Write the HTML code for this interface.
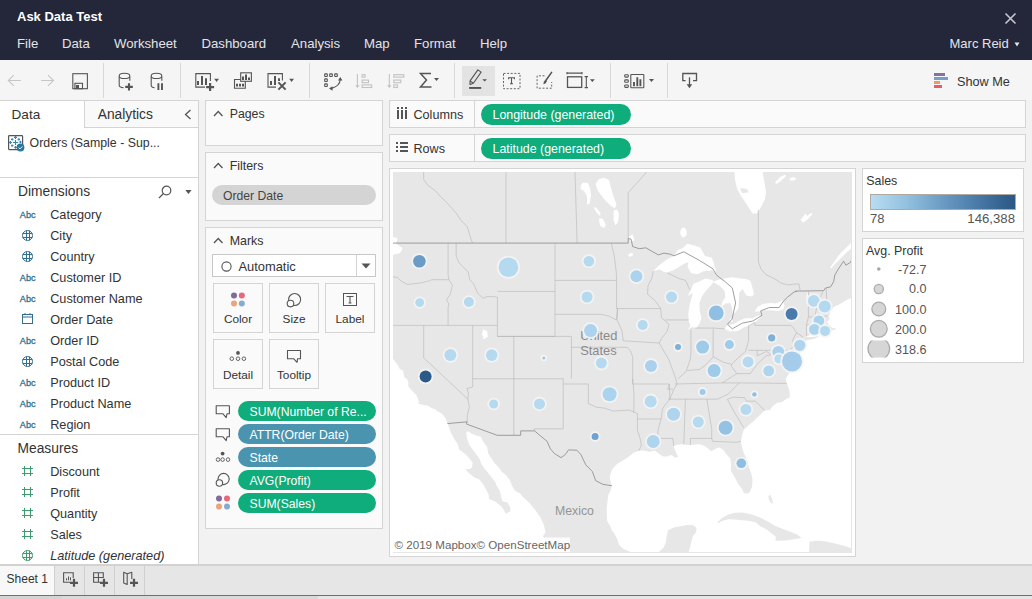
<!DOCTYPE html>
<html><head><meta charset="utf-8"><title>Ask Data Test</title>
<style>
*{margin:0;padding:0;box-sizing:border-box}
html,body{width:1032px;height:599px;overflow:hidden}
body{position:relative;background:#f2f2f2;font-family:"Liberation Sans",sans-serif;color:#333}
.a{position:absolute}
.t{position:absolute;white-space:nowrap;line-height:20px;font-family:"Liberation Sans",sans-serif}
svg.a{overflow:visible}
</style></head><body>
<div class="a" style="left:0px;top:0px;width:1032px;height:60px;background:#232739"></div>
<div class="t" style="left:17px;top:7px;font-size:13px;color:#ffffff;font-weight:bold;">Ask Data Test</div>
<div class="t" style="left:17px;top:34px;font-size:13.2px;color:#e4e4e8;">File</div>
<div class="t" style="left:62px;top:34px;font-size:13.2px;color:#e4e4e8;">Data</div>
<div class="t" style="left:114px;top:34px;font-size:13.2px;color:#e4e4e8;">Worksheet</div>
<div class="t" style="left:201.5px;top:34px;font-size:13.2px;color:#e4e4e8;">Dashboard</div>
<div class="t" style="left:291px;top:34px;font-size:13.2px;color:#e4e4e8;">Analysis</div>
<div class="t" style="left:364px;top:34px;font-size:13.2px;color:#e4e4e8;">Map</div>
<div class="t" style="left:414px;top:34px;font-size:13.2px;color:#e4e4e8;">Format</div>
<div class="t" style="left:480px;top:34px;font-size:13.2px;color:#e4e4e8;">Help</div>
<div class="t" style="left:949.5px;top:34px;font-size:13px;color:#e4e4e8;">Marc Reid</div>
<svg class="a" style="left:1014px;top:42px;" width="6" height="5" viewBox="0 0 6 5"><path d="M0.5 0.5 L5.5 0.5 L3 4.5Z" fill="#e4e4e8"/></svg>
<svg class="a" style="left:1004px;top:12px;" width="13" height="13" viewBox="0 0 13 13"><path d="M1.5 1.5 L11.5 11.5 M11.5 1.5 L1.5 11.5" stroke="#c8c8cc" stroke-width="1.6"/></svg>
<div class="a" style="left:0px;top:60px;width:1032px;height:40px;background:#f5f5f5"></div>
<div class="a" style="left:103px;top:63px;width:1px;height:35px;background:#d8d8d8"></div>
<div class="a" style="left:180px;top:63px;width:1px;height:35px;background:#d8d8d8"></div>
<div class="a" style="left:309px;top:63px;width:1px;height:35px;background:#d8d8d8"></div>
<div class="a" style="left:454px;top:63px;width:1px;height:35px;background:#d8d8d8"></div>
<div class="a" style="left:610px;top:63px;width:1px;height:35px;background:#d8d8d8"></div>
<div class="a" style="left:667px;top:63px;width:1px;height:35px;background:#d8d8d8"></div>
<svg class="a" style="left:7px;top:74px;" width="15" height="13" viewBox="0 0 15 13"><path d="M6.8 1.2 L1.3 6.5 L6.8 11.8 M1.3 6.5 H13.9" fill="none" stroke="#c6c6c6" stroke-width="1.1"/></svg>
<svg class="a" style="left:40px;top:74px;" width="15" height="13" viewBox="0 0 15 13"><path d="M8 1.2 L13.5 6.5 L8 11.8 M13.5 6.5 H1" fill="none" stroke="#c6c6c6" stroke-width="1.1"/></svg>
<svg class="a" style="left:71px;top:72px;" width="18" height="18" viewBox="0 0 18 18"><rect x="1.8" y="1.7" width="14.6" height="15" fill="none" stroke="#555" stroke-width="1.1"/><rect x="3.9" y="11.3" width="7.6" height="5.4" fill="none" stroke="#555" stroke-width="1.1"/><rect x="5" y="13" width="3" height="3.8" fill="#555"/></svg>
<svg class="a" style="left:117px;top:72px;" width="18" height="20" viewBox="0 0 18 20"><path d="M2.2 3.9 V13 Q2.2 15.6 6.5 15.6 M2.2 3.9 A5.3 2.6 0 0 1 12.8 3.9 A5.3 2.6 0 0 1 2.2 3.9 M12.8 3.9 V8.8" fill="none" stroke="#555" stroke-width="1.1"/><path d="M12 11.2 V18.6 M8.2 14.9 H15.8" stroke="#555" stroke-width="2.1"/></svg>
<svg class="a" style="left:149px;top:72px;" width="15" height="20" viewBox="0 0 15 20"><path d="M2.2 3.9 V13 Q2.2 15.6 5.5 15.6 M2.2 3.9 A5.3 2.6 0 0 1 12.8 3.9 A5.3 2.6 0 0 1 2.2 3.9 M12.8 3.9 V8.8" fill="none" stroke="#555" stroke-width="1.1"/><path d="M9.4 11.3 V18 M13 11.3 V18" stroke="#555" stroke-width="1.9"/></svg>
<svg class="a" style="left:194px;top:72px;" width="26" height="20" viewBox="0 0 26 20"><path d="M11 15.1 H1.8 V1.6 H16.4 V9" fill="none" stroke="#555" stroke-width="1.1"/><path d="M4 9 V13 M8 3.9 V13 M12 6.2 V13" stroke="#555" stroke-width="2"/><path d="M16.1 11.1 V19.1 M12.1 15.1 H20.1" stroke="#555" stroke-width="2.2"/><path d="M20.2 6.7 H25 L22.6 10Z" fill="#555"/></svg>
<svg class="a" style="left:233px;top:71px;" width="20" height="19" viewBox="0 0 20 19"><rect x="7.7" y="1.8" width="10.7" height="8.5" fill="none" stroke="#555" stroke-width="1.1"/><path d="M10 5.5 V9 M13 3.5 V9 M16 6.5 V9" stroke="#555" stroke-width="2"/><path d="M7.7 8.5 H1.5 V17.3 H12.3 V10.3" fill="none" stroke="#555" stroke-width="1.1"/><path d="M4 12.7 V15.5 M7 12.7 V15.5 M10 12.7 V15.5" stroke="#555" stroke-width="2"/></svg>
<svg class="a" style="left:266px;top:72px;" width="29" height="20" viewBox="0 0 29 20"><path d="M10 15.1 H2 V1.6 H16.4 V8.5" fill="none" stroke="#555" stroke-width="1.1"/><path d="M5 9 V13 M9 3.9 V13 M13 6.2 V9" stroke="#555" stroke-width="2"/><path d="M12.4 10.4 L19.6 17.6 M19.6 10.4 L12.4 17.6" stroke="#555" stroke-width="2"/><path d="M23.2 6.7 H28 L25.6 10Z" fill="#555"/></svg>
<svg class="a" style="left:323px;top:72px;" width="21" height="20" viewBox="0 0 21 20"><g fill="none" stroke="#555" stroke-width="1.1"><rect x="1.7" y="1.9" width="2.6" height="2.6" rx="0.5"/><rect x="6.7" y="1.9" width="2.6" height="2.6" rx="0.5"/><rect x="11.7" y="1.9" width="2.6" height="2.6" rx="0.5"/><rect x="1.7" y="6.9" width="2.6" height="2.6" rx="0.5"/><rect x="1.7" y="11.9" width="2.6" height="2.6" rx="0.5"/><path d="M17.2 7.6 Q17 14 8.6 16.4"/></g><path d="M17.3 5.0 L15.0 8.4 L19.4 8.6Z M6.0 16.6 L9.4 14.2 L9.6 18.8Z" fill="#555"/></svg>
<svg class="a" style="left:354px;top:72px;" width="19" height="19" viewBox="0 0 19 19"><g fill="none" stroke="#c2c2c2" stroke-width="1.1"><path d="M3.4 2 V14"/><rect x="8.1" y="2.7" width="3" height="2.4"/><rect x="8.1" y="8.1" width="6.4" height="2.6"/><rect x="8.1" y="12.9" width="9.6" height="2.6"/></g><path d="M3.4 16 L1.2 13.2 H5.6Z" fill="#c2c2c2"/></svg>
<svg class="a" style="left:387px;top:72px;" width="19" height="19" viewBox="0 0 19 19"><g fill="none" stroke="#c2c2c2" stroke-width="1.1"><path d="M2.3 2 V14"/><rect x="6.8" y="2.7" width="10" height="2.4"/><rect x="6.8" y="8.1" width="7" height="2.6"/><rect x="6.8" y="12.9" width="3.7" height="2.6"/></g><path d="M2.3 16 L0.1 13.2 H4.5Z" fill="#c2c2c2"/></svg>
<svg class="a" style="left:419px;top:72px;" width="21" height="17" viewBox="0 0 21 17"><path d="M12 1.5 H1.5 L7.5 8 L1.5 15 H12.5" fill="none" stroke="#555" stroke-width="1.5"/><path d="M15 6 H20 L17.5 9Z" fill="#555"/></svg>
<div class="a" style="left:462px;top:66px;width:33px;height:30px;background:#e3e3e3"></div>
<svg class="a" style="left:462px;top:66px;" width="33" height="30" viewBox="0 0 33 30"><path d="M8 18.5 L8.06 14.9 L15.86 3.85 L19.14 6.15 L11.34 17.2 Z M8.06 14.9 L11.34 17.2" fill="none" stroke="#555" stroke-width="1.1" stroke-linejoin="round"/><rect x="7.1" y="21" width="12.1" height="1.9" fill="#555"/><path d="M20.3 13.2 H25 L22.65 15.6Z" fill="#555"/></svg>
<svg class="a" style="left:503px;top:72px;" width="18" height="18" viewBox="0 0 18 18"><rect x="0.5" y="1.4" width="16.5" height="15.3" fill="none" stroke="#666" stroke-width="1" stroke-dasharray="2 1.6"/><path d="M5.6 7.3 V5.8 H11.4 V7.3 M8.5 5.8 V11.8 M7 11.8 H10" fill="none" stroke="#555" stroke-width="1.1"/></svg>
<svg class="a" style="left:536px;top:70px;" width="18" height="20" viewBox="0 0 18 20"><path d="M8.5 5.8 H1.1 V18.2 H15.7 V12" fill="none" stroke="#666" stroke-width="1" stroke-dasharray="2 1.6"/><path d="M15.6 2.4 L10 10.2" stroke="#555" stroke-width="1.6" stroke-linecap="round"/><path d="M9.4 9.8 L11 11.2 L9.4 13.6 L7.3 14.2 L8 11.6Z" fill="#555"/></svg>
<svg class="a" style="left:566px;top:71px;" width="31" height="19" viewBox="0 0 31 19"><path d="M1 1 V3.2 M1 2.1 H16 M16 1 V3.2 M20.3 5.6 V16.6 M18.6 5.6 H22 M18.6 16.6 H22" fill="none" stroke="#555" stroke-width="1.1"/><rect x="1.5" y="5.8" width="14.2" height="10.6" fill="none" stroke="#555" stroke-width="1.3"/><path d="M23.9 8.2 H28.8 L26.35 11Z" fill="#555"/></svg>
<svg class="a" style="left:623px;top:73px;" width="32" height="16" viewBox="0 0 32 16"><g fill="none" stroke="#555" stroke-width="1.1"><rect x="1.7" y="1.7" width="3.6" height="2.4" rx="0.8"/><rect x="1.7" y="6.9" width="3.6" height="2.4" rx="0.8"/><rect x="1.7" y="12" width="3.6" height="2.4" rx="0.8"/><rect x="7.8" y="1.5" width="13" height="13.3" rx="0.6"/></g><path d="M11 9 V13.2 M14.3 4.2 V13.2 M17.4 6.2 V13.2" stroke="#555" stroke-width="1.9"/><path d="M26 6 H31 L28.5 9Z" fill="#555"/></svg>
<svg class="a" style="left:681px;top:72px;" width="18" height="18" viewBox="0 0 18 18"><path d="M4.6 8.7 H1.8 V1.5 H15.5 V8.7 H12" fill="none" stroke="#555" stroke-width="1.3"/><path d="M8.5 5.3 V13" stroke="#555" stroke-width="1.3"/><path d="M5.7 12.2 H11.2 L8.45 16.2Z" fill="#555"/></svg>
<div class="a" style="left:934px;top:73px;width:11px;height:2.5px;background:#8175a0"></div>
<div class="a" style="left:934px;top:77px;width:14px;height:2.5px;background:#7a9dc7"></div>
<div class="a" style="left:934px;top:81px;width:6px;height:2.5px;background:#eb9b63"></div>
<div class="a" style="left:934px;top:85px;width:8px;height:2.5px;background:#e35d6a"></div>
<div class="t" style="left:957px;top:72px;font-size:12.7px;color:#333;">Show Me</div>
<div class="a" style="left:0px;top:100px;width:199px;height:465px;background:#ffffff;border-top:1px solid #d4d4d4;border-right:1px solid #d4d4d4"></div>
<div class="a" style="left:84px;top:101px;width:114px;height:27px;background:#f9f9f9;border-left:1px solid #d4d4d4;border-bottom:1px solid #d4d4d4"></div>
<div class="t" style="left:11.5px;top:105px;font-size:13.6px;color:#333;">Data</div>
<div class="t" style="left:97.7px;top:105px;font-size:13.8px;color:#333;">Analytics</div>
<svg class="a" style="left:184px;top:109px;" width="8" height="11" viewBox="0 0 8 11"><path d="M6.5 1 L1.5 5.5 L6.5 10" fill="none" stroke="#555" stroke-width="1.3"/></svg>
<svg class="a" style="left:8px;top:135px;" width="18" height="17" viewBox="0 0 18 17"><rect x="0.6" y="0.6" width="14" height="14" rx="0.8" fill="#fff" stroke="#555" stroke-width="1.2"/><path d="M4.9 7.5 H10.1 M7.5 4.9 V10.1 M6.0 2.4 H9.0 M7.5 0.8999999999999999 V3.9 M0.8999999999999999 7.5 H3.9 M2.4 6.0 V9.0 M11.1 7.0 H13.700000000000001 M12.4 5.7 V8.3 M3.0 4.4 H5.4 M4.2 3.2 V5.6000000000000005 M9.600000000000001 4.4 H12.0 M10.8 3.2 V5.6000000000000005 M3.0 10.6 H5.4 M4.2 9.4 V11.799999999999999 M6.2 12.4 H8.8 M7.5 11.1 V13.700000000000001 " stroke="#2f86c4" stroke-width="1.1"/><circle cx="12.5" cy="12.5" r="3.9" fill="#2b7898"/><path d="M10.6 12.6 L12 13.9 L14.4 11.4" fill="none" stroke="#fff" stroke-width="0.9"/></svg>
<div class="t" style="left:29.6px;top:133px;font-size:12.35px;color:#333;">Orders (Sample - Sup...</div>
<div class="a" style="left:0px;top:177px;width:198px;height:1px;background:#d4d4d4"></div>
<div class="t" style="left:18px;top:182px;font-size:13.8px;color:#333;">Dimensions</div>
<svg class="a" style="left:158px;top:185px;" width="14" height="14" viewBox="0 0 14 14"><circle cx="8.5" cy="5.5" r="4.3" fill="none" stroke="#555" stroke-width="1.2"/><path d="M5.5 8.5 L1 13" stroke="#555" stroke-width="1.3"/></svg>
<svg class="a" style="left:185px;top:190px;" width="8" height="5" viewBox="0 0 8 5"><path d="M0.3 0 H6.6 L3.45 4Z" fill="#555"/></svg>
<div class="t" style="left:19.8px;top:205px;font-size:9.2px;color:#33708f;-webkit-text-stroke:0.3px #33708f">Abc</div>
<div class="t" style="left:50.2px;top:205px;font-size:12.7px;color:#333;">Category</div>
<svg class="a" style="left:21px;top:229px;" width="13" height="13" viewBox="0 0 13 13"><g fill="none" stroke="#33708f" stroke-width="1"><circle cx="6.5" cy="6.5" r="5"/><path d="M5.5 1.6 V11.4 M8.5 1.6 V11.4 M1.6 4.5 H11.4 M1.6 8.5 H11.4"/></g></svg>
<div class="t" style="left:50.2px;top:226px;font-size:12.7px;color:#333;">City</div>
<svg class="a" style="left:21px;top:250px;" width="13" height="13" viewBox="0 0 13 13"><g fill="none" stroke="#33708f" stroke-width="1"><circle cx="6.5" cy="6.5" r="5"/><path d="M5.5 1.6 V11.4 M8.5 1.6 V11.4 M1.6 4.5 H11.4 M1.6 8.5 H11.4"/></g></svg>
<div class="t" style="left:50.2px;top:247px;font-size:12.7px;color:#333;">Country</div>
<div class="t" style="left:19.8px;top:268px;font-size:9.2px;color:#33708f;-webkit-text-stroke:0.3px #33708f">Abc</div>
<div class="t" style="left:50.2px;top:268px;font-size:12.7px;color:#333;">Customer ID</div>
<div class="t" style="left:19.8px;top:289px;font-size:9.2px;color:#33708f;-webkit-text-stroke:0.3px #33708f">Abc</div>
<div class="t" style="left:50.2px;top:289px;font-size:12.7px;color:#333;">Customer Name</div>
<svg class="a" style="left:22px;top:313px;" width="11" height="11" viewBox="0 0 11 11"><g fill="none" stroke="#33708f" stroke-width="1"><rect x="0.5" y="1.5" width="10" height="9"/><path d="M0.5 4 H10.5 M3 0 V2 M8 0 V2"/></g></svg>
<div class="t" style="left:50.2px;top:310px;font-size:12.7px;color:#333;">Order Date</div>
<div class="t" style="left:19.8px;top:331px;font-size:9.2px;color:#33708f;-webkit-text-stroke:0.3px #33708f">Abc</div>
<div class="t" style="left:50.2px;top:331px;font-size:12.7px;color:#333;">Order ID</div>
<svg class="a" style="left:21px;top:355px;" width="13" height="13" viewBox="0 0 13 13"><g fill="none" stroke="#33708f" stroke-width="1"><circle cx="6.5" cy="6.5" r="5"/><path d="M5.5 1.6 V11.4 M8.5 1.6 V11.4 M1.6 4.5 H11.4 M1.6 8.5 H11.4"/></g></svg>
<div class="t" style="left:50.2px;top:352px;font-size:12.7px;color:#333;">Postal Code</div>
<div class="t" style="left:19.8px;top:373px;font-size:9.2px;color:#33708f;-webkit-text-stroke:0.3px #33708f">Abc</div>
<div class="t" style="left:50.2px;top:373px;font-size:12.7px;color:#333;">Product ID</div>
<div class="t" style="left:19.8px;top:394px;font-size:9.2px;color:#33708f;-webkit-text-stroke:0.3px #33708f">Abc</div>
<div class="t" style="left:50.2px;top:394px;font-size:12.7px;color:#333;">Product Name</div>
<div class="t" style="left:19.8px;top:415px;font-size:9.2px;color:#33708f;-webkit-text-stroke:0.3px #33708f">Abc</div>
<div class="t" style="left:50.2px;top:415px;font-size:12.7px;color:#333;">Region</div>
<div class="a" style="left:0px;top:434px;width:198px;height:1px;background:#d4d4d4"></div>
<div class="t" style="left:17.5px;top:439px;font-size:13.8px;color:#333;">Measures</div>
<svg class="a" style="left:22px;top:466px;" width="12" height="11" viewBox="0 0 12 11"><path d="M2.5 0 V10 M8.5 0 V10 M0 2.5 H11 M0 7.5 H11" stroke="#3f9a72" stroke-width="1.05" fill="none"/></svg>
<div class="t" style="left:50.2px;top:462px;font-size:12.7px;color:#333;">Discount</div>
<svg class="a" style="left:22px;top:487px;" width="12" height="11" viewBox="0 0 12 11"><path d="M2.5 0 V10 M8.5 0 V10 M0 2.5 H11 M0 7.5 H11" stroke="#3f9a72" stroke-width="1.05" fill="none"/></svg>
<div class="t" style="left:50.2px;top:483px;font-size:12.7px;color:#333;">Profit</div>
<svg class="a" style="left:22px;top:508px;" width="12" height="11" viewBox="0 0 12 11"><path d="M2.5 0 V10 M8.5 0 V10 M0 2.5 H11 M0 7.5 H11" stroke="#3f9a72" stroke-width="1.05" fill="none"/></svg>
<div class="t" style="left:50.2px;top:504px;font-size:12.7px;color:#333;">Quantity</div>
<svg class="a" style="left:22px;top:529px;" width="12" height="11" viewBox="0 0 12 11"><path d="M2.5 0 V10 M8.5 0 V10 M0 2.5 H11 M0 7.5 H11" stroke="#3f9a72" stroke-width="1.05" fill="none"/></svg>
<div class="t" style="left:50.2px;top:525px;font-size:12.7px;color:#333;">Sales</div>
<svg class="a" style="left:21px;top:549px;" width="13" height="13" viewBox="0 0 13 13"><g fill="none" stroke="#3f9a72" stroke-width="1"><circle cx="6.5" cy="6.5" r="5"/><path d="M5.5 1.6 V11.4 M8.5 1.6 V11.4 M1.6 4.5 H11.4 M1.6 8.5 H11.4"/></g></svg>
<div class="t" style="left:50.2px;top:546px;font-size:12.7px;color:#333;font-style:italic;">Latitude (generated)</div>
<div class="a" style="left:205px;top:100px;width:178px;height:46px;background:#fafafa;border:1px solid #d4d4d4"></div>
<svg class="a" style="left:213px;top:110px;" width="11" height="7" viewBox="0 0 11 7"><path d="M1 6 L5.25 1.5 L9.5 6" fill="none" stroke="#555" stroke-width="1.3"/></svg>
<div class="t" style="left:229.7px;top:104px;font-size:12.3px;color:#333;">Pages</div>
<div class="a" style="left:205px;top:152px;width:178px;height:69px;background:#fafafa;border:1px solid #d4d4d4"></div>
<svg class="a" style="left:213px;top:162px;" width="11" height="7" viewBox="0 0 11 7"><path d="M1 6 L5.25 1.5 L9.5 6" fill="none" stroke="#555" stroke-width="1.3"/></svg>
<div class="t" style="left:229.7px;top:156px;font-size:12.4px;color:#333;">Filters</div>
<div class="a" style="left:212px;top:185px;width:164px;height:20px;background:#d4d4d4;border-radius:10px"></div>
<div class="t" style="left:223px;top:186px;font-size:12.2px;color:#444;">Order Date</div>
<div class="a" style="left:205px;top:227px;width:178px;height:302px;background:#fafafa;border:1px solid #d4d4d4"></div>
<svg class="a" style="left:213px;top:237px;" width="11" height="7" viewBox="0 0 11 7"><path d="M1 6 L5.25 1.5 L9.5 6" fill="none" stroke="#555" stroke-width="1.3"/></svg>
<div class="t" style="left:229.7px;top:231px;font-size:12.4px;color:#333;">Marks</div>
<div class="a" style="left:212px;top:254px;width:164px;height:23px;background:#fff;border:1px solid #c8c8c8"></div>
<div class="a" style="left:356px;top:255px;width:1px;height:21px;background:#d4d4d4"></div>
<svg class="a" style="left:221px;top:261px;" width="11" height="11" viewBox="0 0 11 11"><circle cx="5.5" cy="5.5" r="4.6" fill="none" stroke="#555" stroke-width="1.1"/></svg>
<div class="t" style="left:238.4px;top:257px;font-size:12.9px;color:#333;">Automatic</div>
<svg class="a" style="left:361px;top:263px;" width="10" height="6" viewBox="0 0 10 6"><path d="M0.5 0.5 H9.5 L5 5.5Z" fill="#555"/></svg>
<div class="a" style="left:213px;top:283px;width:50px;height:50px;background:#fafafa;border:1px solid #d4d4d4"></div>
<svg class="a" style="left:213px;top:283px" width="50" height="50"><circle cx="21" cy="12.5" r="3" fill="#7f6b9c"/><circle cx="28.8" cy="12.5" r="3" fill="#e8687a"/><circle cx="21" cy="20.5" r="3" fill="#eba57c"/><circle cx="28.8" cy="20.5" r="3" fill="#86abd3"/></svg>
<div class="t" style="left:238px;top:309px;font-size:11.8px;color:#333;transform:translateX(-50%)">Color</div>
<div class="a" style="left:269px;top:283px;width:50px;height:50px;background:#fafafa;border:1px solid #d4d4d4"></div>
<svg class="a" style="left:269px;top:283px" width="50" height="50"><g fill="none" stroke="#555" stroke-width="1.1"><circle cx="25.6" cy="16.5" r="6"/><circle cx="21.5" cy="20.6" r="3.3" fill="#fafafa"/></g></svg>
<div class="t" style="left:294px;top:309px;font-size:11.8px;color:#333;transform:translateX(-50%)">Size</div>
<div class="a" style="left:325px;top:283px;width:50px;height:50px;background:#fafafa;border:1px solid #d4d4d4"></div>
<svg class="a" style="left:325px;top:283px" width="50" height="50"><rect x="18.5" y="10.5" width="13" height="12" fill="none" stroke="#555" stroke-width="1"/><path d="M21.5 13.5 H28.5 M25 13.5 V20 M23.5 20 H26.5" fill="none" stroke="#555" stroke-width="1.1"/></svg>
<div class="t" style="left:350px;top:309px;font-size:11.8px;color:#333;transform:translateX(-50%)">Label</div>
<div class="a" style="left:213px;top:339px;width:50px;height:50px;background:#fafafa;border:1px solid #d4d4d4"></div>
<svg class="a" style="left:213px;top:339px" width="50" height="50"><g fill="none" stroke="#555" stroke-width="0.9"><circle cx="18.8" cy="19.7" r="1.8"/><circle cx="25" cy="19.7" r="1.8"/><circle cx="30.9" cy="19.7" r="1.8"/></g><circle cx="25" cy="13.9" r="1.9" fill="#555"/></svg>
<div class="t" style="left:238px;top:365px;font-size:11.8px;color:#333;transform:translateX(-50%)">Detail</div>
<div class="a" style="left:269px;top:339px;width:50px;height:50px;background:#fafafa;border:1px solid #d4d4d4"></div>
<svg class="a" style="left:269px;top:339px" width="50" height="50"><path d="M18.5 11.5 H31.5 V19.7 H28.6 L28 23.3 L24.6 19.7 H18.5Z" fill="none" stroke="#555" stroke-width="1.1" stroke-linejoin="round"/></svg>
<div class="t" style="left:294px;top:365px;font-size:11.8px;color:#333;transform:translateX(-50%)">Tooltip</div>
<div class="a" style="left:238px;top:401px;width:138px;height:20px;background:#0fac7c;border-radius:10.0px"></div>
<div class="t" style="left:249.5px;top:402px;font-size:12.2px;color:#fff;">SUM(Number of Re...</div>
<svg class="a" style="left:215px;top:404px;" width="17" height="16" viewBox="0 0 17 16"><path d="M1.2 1.8 H14.4 V9.8 H12 L11.2 13.6 L8 9.8 H1.2Z" fill="none" stroke="#555" stroke-width="1.1" stroke-linejoin="round"/></svg>
<div class="a" style="left:238px;top:424px;width:138px;height:20px;background:#4a94b0;border-radius:10.0px"></div>
<div class="t" style="left:249.5px;top:425px;font-size:12.2px;color:#fff;">ATTR(Order Date)</div>
<svg class="a" style="left:215px;top:427px;" width="17" height="16" viewBox="0 0 17 16"><path d="M1.2 1.8 H14.4 V9.8 H12 L11.2 13.6 L8 9.8 H1.2Z" fill="none" stroke="#555" stroke-width="1.1" stroke-linejoin="round"/></svg>
<div class="a" style="left:238px;top:447px;width:138px;height:20px;background:#4a94b0;border-radius:10.0px"></div>
<div class="t" style="left:249.5px;top:448px;font-size:12.2px;color:#fff;">State</div>
<svg class="a" style="left:215px;top:450px;" width="17" height="16" viewBox="0 0 17 16"><g fill="none" stroke="#555" stroke-width="0.9"><circle cx="3" cy="9.6" r="1.8"/><circle cx="7.6" cy="9.6" r="1.8"/><circle cx="13" cy="9.6" r="1.8"/></g><circle cx="7.6" cy="3.6" r="1.9" fill="#555"/></svg>
<div class="a" style="left:238px;top:470px;width:138px;height:20px;background:#0fac7c;border-radius:10.0px"></div>
<div class="t" style="left:249.5px;top:471px;font-size:12.2px;color:#fff;">AVG(Profit)</div>
<svg class="a" style="left:215px;top:473px;" width="17" height="16" viewBox="0 0 17 16"><g fill="none" stroke="#555" stroke-width="1.1"><circle cx="8.6" cy="6" r="5.6"/><circle cx="4.4" cy="10" r="3.2" fill="#fafafa"/></g></svg>
<div class="a" style="left:238px;top:493px;width:138px;height:20px;background:#0fac7c;border-radius:10.0px"></div>
<div class="t" style="left:249.5px;top:494px;font-size:12.2px;color:#fff;">SUM(Sales)</div>
<svg class="a" style="left:215px;top:495px;" width="17" height="17" viewBox="0 0 17 17"><circle cx="4" cy="3.6" r="3" fill="#7f6b9c"/><circle cx="12" cy="3.6" r="3" fill="#e8687a"/><circle cx="4" cy="11.6" r="3" fill="#eba57c"/><circle cx="12" cy="11.6" r="3" fill="#86abd3"/></svg>
<div class="a" style="left:389px;top:100px;width:637px;height:28px;background:#fafafa;border:1px solid #d4d4d4"></div>
<div class="a" style="left:474px;top:101px;width:1px;height:26px;background:#d4d4d4"></div>
<div class="t" style="left:413.5px;top:105px;font-size:12.6px;color:#333;">Columns</div>
<svg class="a" style="left:396px;top:106px" width="12" height="14"><path d="M2 1 V3 M6 1 V3 M10 1 V3 M2 4 V13 M6 4 V13 M10 4 V13" stroke="#555" stroke-width="2"/></svg>
<div class="a" style="left:389px;top:134px;width:637px;height:28px;background:#fafafa;border:1px solid #d4d4d4"></div>
<div class="a" style="left:474px;top:135px;width:1px;height:26px;background:#d4d4d4"></div>
<div class="t" style="left:413.5px;top:139px;font-size:12.6px;color:#333;">Rows</div>
<svg class="a" style="left:396px;top:141px" width="14" height="12"><path d="M0 2 H2 M0 6 H2 M0 10 H2 M4 2 H12 M4 6 H12 M4 10 H12" stroke="#555" stroke-width="2"/></svg>
<div class="a" style="left:481px;top:104px;width:150px;height:21px;background:#0fac7c;border-radius:10.5px"></div>
<div class="t" style="left:492.5px;top:105px;font-size:12.4px;color:#fff;">Longitude (generated)</div>
<div class="a" style="left:481px;top:138px;width:150px;height:21px;background:#0fac7c;border-radius:10.5px"></div>
<div class="t" style="left:492.5px;top:139px;font-size:12.4px;color:#fff;">Latitude (generated)</div>
<div class="a" style="left:862px;top:168px;width:162px;height:64px;background:#fff;border:1px solid #d4d4d4"></div>
<div class="t" style="left:866.3px;top:171px;font-size:12.4px;color:#333;">Sales</div>
<div class="a" style="left:870px;top:194px;width:146px;height:16px;background:linear-gradient(to right,#b9ddf1,#92c0df 25%,#6a9bc3 50%,#4878a6 75%,#2a5783);border:1px solid #b0a9a0"></div>
<div class="t" style="left:870px;top:209px;font-size:13px;color:#555;">78</div>
<div class="t" style="right:17px;top:209px;font-size:13.2px;color:#555;">146,388</div>
<div class="a" style="left:862px;top:238px;width:162px;height:125px;background:#fff;border:1px solid #d4d4d4"></div>
<div class="t" style="left:866px;top:241px;font-size:12.4px;color:#333;">Avg. Profit</div>
<svg class="a" style="left:862px;top:238px" width="162" height="125"><defs><clipPath id="lc"><rect x="0" y="102.5" width="40" height="17"/></clipPath></defs><circle cx="16.8" cy="31" r="1.8" fill="#a8a8a8"/><circle cx="16.8" cy="51" r="4.6" fill="#d6d6d6" stroke="#acacac" stroke-width="1.3"/><circle cx="16.8" cy="71" r="6.9" fill="#d6d6d6" stroke="#acacac" stroke-width="1.3"/><circle cx="16.8" cy="90.8" r="8.4" fill="#d6d6d6" stroke="#acacac" stroke-width="1.3"/><circle cx="16.8" cy="110.8" r="10.8" fill="#d6d6d6" stroke="#acacac" stroke-width="1.3" clip-path="url(#lc)"/></svg>
<div class="t" style="right:105.39999999999998px;top:260px;font-size:12.6px;color:#555;">-72.7</div>
<div class="t" style="right:105.39999999999998px;top:279px;font-size:12.6px;color:#555;">0.0</div>
<div class="t" style="right:105.39999999999998px;top:300px;font-size:12.6px;color:#555;">100.0</div>
<div class="t" style="right:105.39999999999998px;top:320px;font-size:12.6px;color:#555;">200.0</div>
<div class="t" style="right:105.39999999999998px;top:340px;font-size:12.6px;color:#555;">318.6</div>
<div class="a" style="left:389px;top:168px;width:467px;height:389px;background:#fff;border:1px solid #d4d4d4"></div>
<svg class="a" style="left:393px;top:172px;overflow:hidden" width="458" height="380" viewBox="393 172 458 380"><rect x="393" y="172" width="459" height="381" fill="#e7e7e7"/><path d="M374.3 355.8L392.8 357.9L393.2 359.0L398.2 365.8L399.8 369.0L403.1 370.5L403.5 373.6L404.4 377.3L407.2 379.3L408.5 382.9L408.1 386.0L412.2 391.1L416.3 395.1L418.4 400.2L418.8 403.7L422.1 404.7L427.8 405.7L431.9 408.2L435.6 409.2L436.9 411.1L439.3 412.1L442.2 414.1L445.5 418.0L447.2 422.5L448.8 426.8L450.9 432.7L454.2 438.9L457.9 444.2L459.1 449.4L465.3 454.1L470.2 459.3L472.7 463.1L471.8 467.7L469.8 469.1L465.3 469.1L468.1 472.4L473.9 477.0L479.7 479.8L483.8 485.3L488.7 494.4L489.1 498.9L495.3 501.6L501.9 507.0L506.0 513.8L510.1 511.5L510.5 507.9L507.6 502.5L502.7 501.6L501.1 497.1L500.2 491.7L496.9 486.2L494.9 481.6L491.2 477.0L487.9 472.4L483.8 467.7L481.3 464.0L479.7 459.3L476.4 454.6L472.3 448.9L469.0 444.2L467.3 438.9L466.1 432.7L468.1 431.2L471.4 433.6L476.4 435.5L480.5 436.5L482.5 440.4L487.1 447.0L488.3 453.7L491.6 458.4L494.5 463.1L498.6 467.3L501.5 471.5L506.0 475.2L509.7 479.8L512.6 487.1L515.1 490.8L520.0 493.5L524.1 498.0L529.9 503.4L535.6 510.6L540.6 517.8L543.9 524.9L545.5 531.9L543.0 536.3L545.5 541.6L550.4 545.9L557.0 551.2L561.1 556.4L563.6 565.0L374.3 565.0Z" fill="#ffffff"/><path d="M868.1 296.0L852.5 297.8L847.5 299.5L842.6 302.4L838.5 304.7L833.6 306.9L830.3 312.0L828.6 316.5L829.9 318.8L827.0 322.1L829.0 324.9L832.7 328.2L835.2 327.7L834.8 324.9L835.6 329.3L830.3 331.0L825.7 331.5L822.9 332.6L816.3 333.7L809.7 335.3L804.7 337.0L813.0 337.0L820.0 335.9L815.4 338.6L805.6 340.8L802.3 341.9L802.3 346.2L801.5 349.9L798.6 354.2L794.5 358.5L793.2 355.8L789.9 353.7L793.2 360.0L793.6 364.3L792.0 368.4L789.1 373.6L786.2 377.8L785.8 379.8L787.1 384.0L789.5 391.1L789.9 397.2L786.6 398.7L781.7 402.2L777.6 402.7L773.5 405.2L769.8 410.1L764.4 410.6L759.5 415.6L753.7 421.0L748.0 425.9L743.8 429.8L742.2 434.6L741.0 441.3L742.2 448.0L744.3 454.6L748.0 462.1L748.4 466.8L751.3 473.3L752.5 479.8L752.1 486.2L750.0 492.1L747.6 493.5L743.8 493.0L742.2 488.9L738.5 484.4L736.0 479.8L733.6 475.2L730.7 470.5L731.1 464.0L730.3 458.4L726.6 454.6L723.3 449.9L719.6 447.5L715.9 448.5L711.3 451.3L708.5 448.9L704.8 446.1L699.4 444.2L692.8 444.7L687.1 445.1L682.1 444.2L675.9 445.1L673.5 446.6L675.1 450.4L676.8 454.6L678.4 456.5L675.1 457.4L671.4 455.1L667.3 456.5L663.2 456.5L659.9 454.6L655.0 450.8L649.2 451.8L643.4 450.4L638.9 450.8L633.6 452.7L630.3 455.6L627.0 457.9L621.6 461.2L617.1 464.0L613.0 468.2L610.9 472.4L609.7 477.9L611.3 484.4L611.8 485.7L610.5 490.8L608.1 495.3L607.6 500.7L606.8 507.0L606.8 515.1L607.2 521.3L610.1 525.8L611.8 530.2L614.6 533.7L617.5 539.8L618.8 544.6L621.2 547.3L624.5 549.4L629.0 551.2L633.6 555.1L636.0 565.0L656.6 565.0L657.0 553.8L659.5 551.2L663.6 547.7L665.7 542.5L666.9 535.5L668.1 530.2L673.9 527.5L680.5 526.2L687.1 524.9L693.6 525.3L696.5 528.0L696.1 531.9L692.8 536.3L691.6 540.7L690.4 545.9L688.7 552.0L686.2 565.0L868.1 565.0Z" fill="#ffffff"/><path d="M717.5 522.2L722.0 518.0L728.3 514.4L735.0 512.8L742.0 512.4L750.0 514.0L759.6 517.3L767.0 521.0L775.3 526.1L783.0 529.0L791.0 532.0L797.0 534.5L801.7 537.9L795.0 539.0L786.0 540.5L775.3 540.8L776.0 537.0L771.0 533.0L767.4 530.0L760.0 526.0L755.7 522.2L748.0 520.8L742.0 520.3L735.0 519.5L728.3 519.3L722.0 521.0L718.5 523.2Z" fill="#e7e7e7"/><path d="M809.5 541.8L815.0 540.8L820.3 540.8L828.0 542.0L836.0 543.7L845.0 546.0L853.0 549.0L853.0 554.0L809.0 554.0Z" fill="#e7e7e7"/><path d="M768.4 495.8L770.5 495.0L772.0 499.0L773.3 503.6L771.0 503.0L769.0 500.0Z" fill="#e7e7e7"/><path d="M653.3 270.7L659.9 269.5L664.0 271.9L667.3 272.5L673.9 270.1L679.7 266.5L684.6 263.5L688.3 262.2L687.5 267.1L691.2 273.1L697.8 274.3L703.5 271.3L710.1 270.7L712.2 270.1L715.0 273.7L715.9 270.7L713.8 262.9L711.7 257.4L705.2 256.1L700.2 247.5L694.5 245.6L687.1 243.7L682.9 248.1L677.2 250.6L673.9 256.1L667.3 259.2L660.7 264.1L653.3 270.7Z" fill="#ffffff"/><path d="M688.3 329.3L690.4 326.0L688.7 321.0L688.3 313.7L689.5 305.8L691.2 299.5L692.8 293.1L687.9 296.0L690.4 290.2L693.6 283.8L699.4 281.4L705.2 278.5L711.7 279.7L713.8 281.4L710.9 285.6L707.6 289.1L704.3 293.1L701.5 297.2L699.4 303.5L699.8 310.9L701.5 317.7L699.8 323.2L696.1 328.2L692.0 329.6Z" fill="#ffffff"/><path d="M713.8 281.4L718.3 279.7L724.1 278.5L732.3 277.3L740.6 278.5L746.3 279.1L750.4 280.8L752.5 287.9L754.1 293.7L752.1 296.6L746.3 295.5L742.6 289.1L739.3 292.6L738.9 300.6L738.5 308.6L735.2 312.6L732.7 314.3L731.9 307.5L730.3 302.9L725.7 303.5L721.2 306.9L722.4 301.8L725.3 297.2L724.5 290.8L720.0 286.1L713.8 282.6Z" fill="#ffffff"/><path d="M724.5 328.8L729.9 331.5L738.1 331.0L744.7 327.1L750.4 324.9L756.2 321.6L761.5 316.5L758.7 315.6L752.1 318.2L745.5 318.2L739.7 320.4L733.1 324.3L727.4 324.9Z" fill="#ffffff"/><path d="M754.5 311.5L757.4 306.9L762.8 304.1L770.2 302.9L775.9 303.5L782.5 300.6L784.6 305.8L783.4 309.2L778.4 310.9L771.8 310.3L764.4 310.3L759.5 311.5Z" fill="#ffffff"/><path d="M729.4 321.6L732.7 322.1L732.3 318.8L729.9 318.8Z" fill="#ffffff"/><path d="M630.3 241.8L634.4 240.6L632.7 234.3L628.6 236.8Z" fill="#ffffff"/><path d="M483.0 329.3L487.1 331.0L487.9 336.4L483.8 339.2L482.1 334.3Z" fill="#ffffff"/><path d="M807.2 291.4L808.5 297.2L807.2 307.5L806.4 298.3Z" fill="#ffffff"/><path d="M803.1 222.7L807.2 216.2L805.6 213.6L800.6 220.1Z" fill="#ffffff"/><path d="M392.0 237.0L396.0 237.5L397.5 239.0L396.0 243.0L398.5 245.5L402.5 248.0L401.5 251.0L399.0 253.5L392.0 255.0Z" fill="#ffffff"/><path d="M604.0 177.7L609.0 180.0L611.0 188.0L614.0 198.0L616.5 205.0L614.8 208.5L611.0 206.0L604.0 199.0L598.0 191.0L595.5 184.0L599.0 179.0Z" fill="#ffffff"/><path d="M613.7 210.6L617.0 209.5L619.0 214.0L618.0 222.0L615.5 225.5L613.5 220.0Z" fill="#ffffff"/><path d="M583.0 182.5L588.0 183.0L590.0 188.0L591.0 195.0L589.5 204.0L587.0 204.5L587.0 196.0L584.0 191.0L580.5 189.0L581.0 185.0Z" fill="#ffffff"/><path d="M593.5 207.5L596.0 207.5L600.5 213.0L600.0 216.0L597.0 213.0Z" fill="#ffffff"/><path d="M599.5 218.0L603.0 219.0L605.8 225.0L604.0 228.0L600.5 226.0L599.0 221.0Z" fill="#ffffff"/><path d="M734.5 171.0L762.4 171.0L764.0 180.0L766.0 192.0L765.0 199.0L761.0 207.0L757.0 213.4L752.5 213.4L746.2 203.5L741.0 196.0L737.2 189.0L735.0 180.0Z" fill="#ffffff"/><path d="M775.0 182.5L780.0 177.0L785.0 174.7L786.0 176.0L781.0 181.0L776.5 184.0Z" fill="#ffffff"/><path d="M789.5 178.5L793.0 177.0L796.7 178.5L794.0 180.5L790.0 180.5Z" fill="#ffffff"/><path d="M803.5 221.0L807.0 216.0L811.5 212.8L812.5 214.0L808.0 219.0L804.5 222.0Z" fill="#ffffff"/><path d="M830.2 267.5L834.0 262.0L839.0 255.0L844.8 249.0L853.0 241.0L853.0 247.0L846.0 253.0L840.0 259.0L835.0 264.0L831.0 268.5Z" fill="#ffffff"/><path d="M740 188 L747 189 L748.5 192.5 L742 193 Z" fill="#e7e7e7"/><ellipse cx="683.5" cy="232.5" rx="3.2" ry="5" fill="#ffffff"/><ellipse cx="630.7" cy="254.8" rx="2.5" ry="1.6" fill="#ffffff" transform="rotate(-25 630.7 254.8)"/><path d="M448.1 243.1L448.1 274.7L449.0 279.7L431.9 279.7L429.5 280.8L419.6 283.2L413.0 283.8L407.2 284.4L400.7 280.8L397.4 277.3L390.0 276.7M449.0 279.7L452.5 285.6L450.0 294.9L446.7 299.5L448.8 304.1L448.1 307.5L448.1 325.4M382.5 325.4L497.4 325.4M423.7 325.4L423.7 357.9L467.9 399.2M467.9 399.2L468.4 393.1L466.9 388.5L472.7 387.0L472.7 325.4M467.9 399.2L469.4 407.2L467.3 415.1L467.2 421.8M456.2 243.1L456.2 256.1L459.1 262.9L468.1 271.9L469.8 279.7L473.9 284.4L477.6 293.1L483.0 298.3L487.1 296.6L493.7 296.6L497.4 297.2L497.4 336.4L513.8 336.4L513.8 435.3M497.4 291.4L555.0 291.4M555.0 243.1L555.0 336.4L497.4 336.4M472.7 378.8L563.6 378.8M513.8 336.4L571.4 336.4L571.4 378.8M555.0 280.4L616.6 280.4M555.0 314.3L600.6 314.3L608.9 316.0L616.3 319.9L617.5 308.6M611.3 243.1L614.2 255.5L616.3 272.5L616.6 280.4L616.6 308.6L660.7 308.6M571.4 347.3L627.0 347.3L630.3 350.5L632.7 356.9L632.7 384.0M563.2 378.8L563.2 428.8L534.0 428.8L534.6 430.9M563.6 384.0L588.3 384.0L588.3 403.6L596.5 407.2L604.8 408.2L613.0 411.1L621.2 410.6L629.4 410.1L637.4 413.6L637.4 419.0L661.1 419.0M632.7 378.8L634.1 395.1L633.7 412.7M632.7 384.0L669.4 384.0L667.6 389.1L673.1 389.1M637.4 419.0L637.4 429.8L640.1 438.4L641.4 445.1L638.9 450.8M661.1 419.0L658.3 428.8L657.4 438.4L672.8 438.4L673.9 446.1M669.4 384.0L669.8 399.2L665.7 404.2L662.4 409.2L661.1 419.0M617.5 308.6L617.1 319.9L622.0 331.0L623.3 340.8L659.1 343.0M660.7 308.6L661.5 317.7L669.0 324.3L667.3 331.0L661.5 338.6L659.1 343.0L669.0 360.0L674.7 375.7L677.2 384.0L673.9 389.1L669.8 399.2M653.3 271.3L651.7 278.5L648.0 285.6L647.6 294.3L655.0 300.6L660.7 308.6M667.3 272.9L678.8 278.5L685.4 280.3L688.7 287.3L690.4 290.2M665.3 319.9L688.7 319.9M690.9 328.1L713.4 328.1L724.5 328.8M690.9 328.1L690.9 354.2L690.4 359.0L687.9 366.4L686.2 370.5M713.2 328.8L713.2 356.9M678.0 378.8L687.1 370.5L699.4 369.5L705.2 365.3L713.4 356.9L723.3 362.2L731.5 364.3L738.1 357.9L745.5 351.5L748.6 340.8L748.6 325.4M731.5 364.3L731.5 366.4L736.7 373.6L722.4 382.9L674.7 384.0M668.1 399.2L717.5 399.2L728.2 394.1L739.3 382.9L722.4 382.9M739.3 382.9L786.6 383.4M736.7 373.6L750.4 373.6L757.0 364.3L766.1 355.8L771.8 354.7L776.8 359.0L783.4 368.4M748.6 350.3L787.7 350.3L787.6 363.7L793.6 363.7M757.2 350.3L757.2 355.8L766.5 351.5L771.8 354.7M748.6 325.7L754.9 322.5L754.9 325.4L791.2 325.4L793.2 327.7L796.5 332.6L792.4 340.8L795.7 345.1L789.9 349.4M796.5 332.6L803.1 337.0M806.4 336.4L806.4 324.9L808.4 317.1L808.4 291.4M806.4 324.9L820.4 325.2L820.4 333.2M808.4 317.1L827.8 316.0M814.6 317.3L817.1 306.4L822.9 291.4M828.6 313.2L827.0 302.9L826.1 287.9M685.4 399.2L683.8 444.2M706.8 399.2L711.7 428.8L711.7 438.4L690.4 438.4L690.4 445.1M711.7 438.4L712.6 441.3L736.4 442.3L740.6 441.3M727.4 399.2L734.8 413.1L743.8 427.8M727.4 399.2L733.1 397.2L744.7 397.7L745.5 399.2L746.3 401.2L755.4 401.2L764.8 410.6M506.0 243.1L506.0 148.2M472.5 243.1L469.8 235.5L467.3 226.6L460.7 220.1L456.6 213.6L448.4 204.3L440.2 196.2L435.2 190.7L427.8 185.2L423.7 179.7L423.7 148.2M577.1 243.1L574.3 148.2M628.2 238.3L628.2 192.8L678.8 135.6M758.3 209.8L758.3 261.2L761.0 269.0L766.0 274.7L771.0 277.0L776.8 280.0L781.0 283.0L788.0 285.0L795.0 284.0L799.0 284.0L800.0 290.0" fill="none" stroke="#acacac" stroke-width="0.5"/><path d="M374.3 243.1L628.2 243.1L628.2 238.3L631.1 239.3L632.7 246.6L639.3 248.7L645.9 247.8L651.7 251.2L658.3 254.9L664.0 253.1L670.6 254.3L673.9 255.8L683.8 251.8L699.4 260.4L713.0 268.9L715.9 274.3L719.2 277.3L724.1 280.8L732.3 287.9L735.6 302.9L733.1 314.3L732.3 318.8L727.4 324.3L732.3 328.8L742.2 323.2L752.9 321.0L762.0 315.4L760.7 310.9L769.4 307.5L779.2 307.5L783.4 301.2L787.5 297.2L794.0 292.0L796.5 291.4L795.7 291.1L823.7 290.7L825.5 288.0L830.7 286.8L833.7 281.5L834.8 275.1L837.8 269.9L843.6 261.1L845.9 265.2L850.6 262.3L853.0 256.0" fill="none" stroke="#939393" stroke-width="0.9"/><path d="M447.4 423.6L467.2 421.8L466.4 424.0L497.2 435.3L520.7 435.3L520.7 430.9L534.6 430.9L538.9 434.6L547.1 441.3L550.4 448.9L554.6 453.7L561.1 457.6L565.3 454.6L568.5 449.9L576.8 450.2L580.9 454.6L585.8 464.9L592.4 471.5L595.7 480.7L603.1 484.4L611.8 485.7" fill="none" stroke="#939393" stroke-width="0.9"/><defs><filter id="hb" x="-50%" y="-50%" width="200%" height="200%"><feGaussianBlur stdDeviation="0.7"/></filter></defs><text x="580.2" y="339.5" font-size="12.9" fill="#8a8a8a" font-family="Liberation Sans">United</text><text x="580.2" y="354.6" font-size="12.9" fill="#8a8a8a" font-family="Liberation Sans">States</text><text x="555" y="514.7" font-size="12.3" fill="#959595" font-family="Liberation Sans">Mexico</text><circle cx="419.4" cy="261.3" r="8.1" fill="#f4f4f4" fill-opacity="0.9" filter="url(#hb)"/><circle cx="419.4" cy="261.3" r="6.3" fill="#6a9cc6"/><circle cx="508.4" cy="267.3" r="11.600000000000001" fill="#f4f4f4" fill-opacity="0.9" filter="url(#hb)"/><circle cx="508.4" cy="267.3" r="9.8" fill="#b5d9ef"/><circle cx="419.7" cy="302.6" r="6.2" fill="#f4f4f4" fill-opacity="0.9" filter="url(#hb)"/><circle cx="419.7" cy="302.6" r="4.4" fill="#b5d9ef"/><circle cx="468.9" cy="302" r="6.8" fill="#f4f4f4" fill-opacity="0.9" filter="url(#hb)"/><circle cx="468.9" cy="302" r="5" fill="#b5d9ef"/><circle cx="588.9" cy="261.2" r="7.1" fill="#f4f4f4" fill-opacity="0.9" filter="url(#hb)"/><circle cx="588.9" cy="261.2" r="5.3" fill="#b5d9ef"/><circle cx="587.1" cy="297" r="7.3" fill="#f4f4f4" fill-opacity="0.9" filter="url(#hb)"/><circle cx="587.1" cy="297" r="5.5" fill="#b5d9ef"/><circle cx="636.4" cy="276.2" r="7.8" fill="#f4f4f4" fill-opacity="0.9" filter="url(#hb)"/><circle cx="636.4" cy="276.2" r="6" fill="#acd3ee"/><circle cx="671.5" cy="297" r="7.3" fill="#f4f4f4" fill-opacity="0.9" filter="url(#hb)"/><circle cx="671.5" cy="297" r="5.5" fill="#b5d9ef"/><circle cx="590.6" cy="330.6" r="8.3" fill="#f4f4f4" fill-opacity="0.9" filter="url(#hb)"/><circle cx="590.6" cy="330.6" r="6.5" fill="#acd3ee"/><circle cx="642.7" cy="325" r="6.8" fill="#f4f4f4" fill-opacity="0.9" filter="url(#hb)"/><circle cx="642.7" cy="325" r="5" fill="#b5d9ef"/><circle cx="601.4" cy="363.1" r="7.3" fill="#f4f4f4" fill-opacity="0.9" filter="url(#hb)"/><circle cx="601.4" cy="363.1" r="5.5" fill="#b5d9ef"/><circle cx="651" cy="365.9" r="7.8" fill="#f4f4f4" fill-opacity="0.9" filter="url(#hb)"/><circle cx="651" cy="365.9" r="6" fill="#a9d1ee"/><circle cx="543.8" cy="358.1" r="3.3" fill="#f4f4f4" fill-opacity="0.9" filter="url(#hb)"/><circle cx="543.8" cy="358.1" r="1.5" fill="#9ec8e8"/><circle cx="539.5" cy="403.9" r="7.3" fill="#f4f4f4" fill-opacity="0.9" filter="url(#hb)"/><circle cx="539.5" cy="403.9" r="5.5" fill="#b5d9ef"/><circle cx="609.6" cy="394.2" r="8.8" fill="#f4f4f4" fill-opacity="0.9" filter="url(#hb)"/><circle cx="609.6" cy="394.2" r="7" fill="#acd3ee"/><circle cx="650.7" cy="401.4" r="7.8" fill="#f4f4f4" fill-opacity="0.9" filter="url(#hb)"/><circle cx="650.7" cy="401.4" r="6" fill="#b5d9ef"/><circle cx="595.1" cy="436.4" r="5.3" fill="#f4f4f4" fill-opacity="0.9" filter="url(#hb)"/><circle cx="595.1" cy="436.4" r="3.5" fill="#6fa3cf"/><circle cx="653.2" cy="441.5" r="8.3" fill="#f4f4f4" fill-opacity="0.9" filter="url(#hb)"/><circle cx="653.2" cy="441.5" r="6.5" fill="#aed4ee"/><circle cx="673.5" cy="414.2" r="8.3" fill="#f4f4f4" fill-opacity="0.9" filter="url(#hb)"/><circle cx="673.5" cy="414.2" r="6.5" fill="#aed4ee"/><circle cx="450.4" cy="355.1" r="7.8" fill="#f4f4f4" fill-opacity="0.9" filter="url(#hb)"/><circle cx="450.4" cy="355.1" r="6" fill="#b5d9ef"/><circle cx="491.7" cy="355.1" r="7.6" fill="#f4f4f4" fill-opacity="0.9" filter="url(#hb)"/><circle cx="491.7" cy="355.1" r="5.8" fill="#b5d9ef"/><circle cx="425.6" cy="376.4" r="7.8" fill="#f4f4f4" fill-opacity="0.9" filter="url(#hb)"/><circle cx="425.6" cy="376.4" r="6" fill="#2b5a88"/><circle cx="493.7" cy="404" r="6.3" fill="#f4f4f4" fill-opacity="0.9" filter="url(#hb)"/><circle cx="493.7" cy="404" r="4.5" fill="#b5d9ef"/><circle cx="716.2" cy="312.9" r="9.200000000000001" fill="#f4f4f4" fill-opacity="0.9" filter="url(#hb)"/><circle cx="716.2" cy="312.9" r="7.4" fill="#8fbfe3"/><circle cx="678" cy="347.1" r="4.8" fill="#f4f4f4" fill-opacity="0.9" filter="url(#hb)"/><circle cx="678" cy="347.1" r="3" fill="#7fb0d8"/><circle cx="702.6" cy="347.1" r="8.3" fill="#f4f4f4" fill-opacity="0.9" filter="url(#hb)"/><circle cx="702.6" cy="347.1" r="6.5" fill="#9fcbea"/><circle cx="729.4" cy="344.6" r="6.3" fill="#f4f4f4" fill-opacity="0.9" filter="url(#hb)"/><circle cx="729.4" cy="344.6" r="4.5" fill="#9fcbea"/><circle cx="748.1" cy="361.9" r="7.3" fill="#f4f4f4" fill-opacity="0.9" filter="url(#hb)"/><circle cx="748.1" cy="361.9" r="5.5" fill="#b5d9ef"/><circle cx="714.1" cy="370.6" r="8.3" fill="#f4f4f4" fill-opacity="0.9" filter="url(#hb)"/><circle cx="714.1" cy="370.6" r="6.5" fill="#9fcbea"/><circle cx="702.6" cy="391.9" r="4.8" fill="#f4f4f4" fill-opacity="0.9" filter="url(#hb)"/><circle cx="702.6" cy="391.9" r="3" fill="#9fcbea"/><circle cx="754.4" cy="394.4" r="4.0" fill="#f4f4f4" fill-opacity="0.9" filter="url(#hb)"/><circle cx="754.4" cy="394.4" r="2.2" fill="#8fbfe3"/><circle cx="745.9" cy="409.4" r="7.3" fill="#f4f4f4" fill-opacity="0.9" filter="url(#hb)"/><circle cx="745.9" cy="409.4" r="5.5" fill="#b5d9ef"/><circle cx="698.3" cy="422" r="7.3" fill="#f4f4f4" fill-opacity="0.9" filter="url(#hb)"/><circle cx="698.3" cy="422" r="5.5" fill="#b5d9ef"/><circle cx="725.6" cy="427.7" r="8.8" fill="#f4f4f4" fill-opacity="0.9" filter="url(#hb)"/><circle cx="725.6" cy="427.7" r="7" fill="#93c2e4"/><circle cx="741.3" cy="463.3" r="6.6" fill="#f4f4f4" fill-opacity="0.9" filter="url(#hb)"/><circle cx="741.3" cy="463.3" r="4.8" fill="#8ebee2"/><circle cx="791.6" cy="314.1" r="7.8" fill="#f4f4f4" fill-opacity="0.9" filter="url(#hb)"/><circle cx="791.6" cy="314.1" r="6.0" fill="#4a7aab"/><circle cx="813.8" cy="300.8" r="7.7" fill="#f4f4f4" fill-opacity="0.9" filter="url(#hb)"/><circle cx="813.8" cy="300.8" r="5.9" fill="#b5d9ef"/><circle cx="824.7" cy="306.5" r="7.8" fill="#f4f4f4" fill-opacity="0.9" filter="url(#hb)"/><circle cx="824.7" cy="306.5" r="6.0" fill="#b3d9ef"/><circle cx="771.7" cy="337.8" r="5.4" fill="#f4f4f4" fill-opacity="0.9" filter="url(#hb)"/><circle cx="771.7" cy="337.8" r="3.6" fill="#7fb0d8"/><circle cx="799.8" cy="345.3" r="7.3999999999999995" fill="#f4f4f4" fill-opacity="0.9" filter="url(#hb)"/><circle cx="799.8" cy="345.3" r="5.6" fill="#aed4ee"/><circle cx="778.3" cy="352.1" r="7.8" fill="#f4f4f4" fill-opacity="0.9" filter="url(#hb)"/><circle cx="778.3" cy="352.1" r="6.0" fill="#a9d1ee"/><circle cx="778.8" cy="358.9" r="6.3" fill="#f4f4f4" fill-opacity="0.9" filter="url(#hb)"/><circle cx="778.8" cy="358.9" r="4.5" fill="#b7dcf1"/><circle cx="792" cy="361.4" r="11.8" fill="#f4f4f4" fill-opacity="0.9" filter="url(#hb)"/><circle cx="792" cy="361.4" r="10" fill="#a5cdeb"/><circle cx="768.7" cy="370.9" r="7.2" fill="#f4f4f4" fill-opacity="0.9" filter="url(#hb)"/><circle cx="768.7" cy="370.9" r="5.4" fill="#aed4ee"/><circle cx="818.9" cy="320.8" r="7.2" fill="#f4f4f4" fill-opacity="0.9" filter="url(#hb)"/><circle cx="818.9" cy="320.8" r="5.4" fill="#aad2ed"/><circle cx="814.4" cy="329.4" r="7.2" fill="#f4f4f4" fill-opacity="0.9" filter="url(#hb)"/><circle cx="814.4" cy="329.4" r="5.4" fill="#acd3ee"/><circle cx="825" cy="330.9" r="6.8" fill="#f4f4f4" fill-opacity="0.9" filter="url(#hb)"/><circle cx="825" cy="330.9" r="5.0" fill="#b3d9ef"/><rect x="393" y="537.5" width="177" height="14.5" fill="#fff" fill-opacity="0.85"/><text x="394.5" y="549" font-size="11.6" fill="#666" font-family="Liberation Sans">© 2019 Mapbox© OpenStreetMap</text></svg>
<div class="a" style="left:851px;top:172px;width:1px;height:381px;background:#e6e6e6"></div>
<div class="a" style="left:393px;top:552px;width:459px;height:1px;background:#e6e6e6"></div>
<div class="a" style="left:0px;top:564px;width:1032px;height:35px;background:#e6e6e6;border-top:2px solid #d2d2d2"></div>
<div class="a" style="left:0px;top:566px;width:55px;height:29px;background:#f8f8f8;border-right:1px solid #d0d0d0"></div>
<div class="t" style="left:6.6px;top:569px;font-size:12px;color:#333;">Sheet 1</div>
<div class="a" style="left:84px;top:566px;width:1px;height:29px;background:#d0d0d0"></div>
<div class="a" style="left:114px;top:566px;width:1px;height:29px;background:#d0d0d0"></div>
<div class="a" style="left:144px;top:566px;width:1px;height:29px;background:#d0d0d0"></div>
<svg class="a" style="left:62px;top:571px;" width="17" height="17" viewBox="0 0 17 17"><path d="M8 11.3 H1.6 V1.7 H11.2 V7" fill="none" stroke="#555" stroke-width="1.1"/><path d="M4.5 7.3 V9.3 M6.5 5.5 V9.3 M8.5 6.3 V9.3" stroke="#555" stroke-width="1"/><path d="M12 7.8 V15.8 M8 11.8 H16" stroke="#555" stroke-width="2.2"/></svg>
<svg class="a" style="left:92px;top:571px;" width="17" height="17" viewBox="0 0 17 17"><path d="M8 11.3 H1.6 V1.7 H11.3 V7 M6.4 1.7 V11.3 M1.6 6.5 H11.3" fill="none" stroke="#555" stroke-width="1.1"/><path d="M12 7.8 V15.8 M8 11.8 H16" stroke="#555" stroke-width="2.2"/></svg>
<svg class="a" style="left:122px;top:571px;" width="17" height="17" viewBox="0 0 17 17"><path d="M1.7 1.3 L5.2 2.7 V13.4 L1.7 12 Z M5.2 2.7 L9.8 1.3 V8" fill="none" stroke="#555" stroke-width="1.1" stroke-linejoin="round"/><path d="M12 7.8 V15.8 M8 11.8 H16" stroke="#555" stroke-width="2.2"/></svg>
<div class="a" style="left:0px;top:595px;width:1032px;height:1px;background:#2f7fd0"></div>
<div class="a" style="left:0px;top:596px;width:62px;height:3px;background:#d4d4d4"></div>
<div class="a" style="left:62px;top:596px;width:256px;height:3px;background:#d9d9d9"></div>
<div class="a" style="left:318px;top:596px;width:714px;height:3px;background:#e5e5e5"></div>
</body></html>
